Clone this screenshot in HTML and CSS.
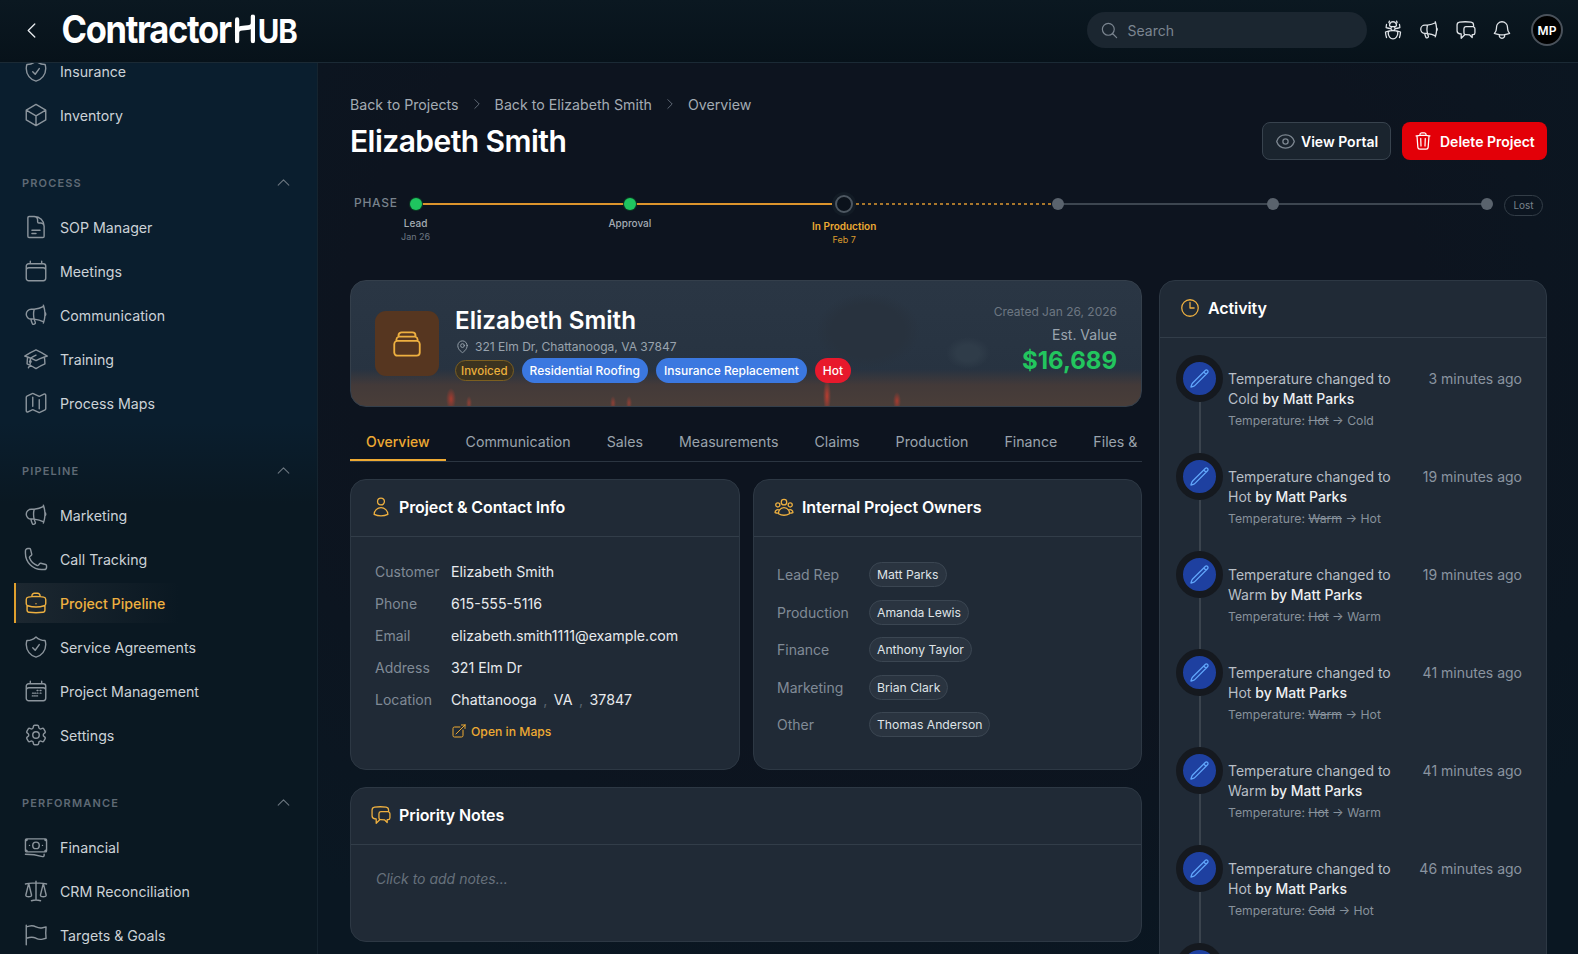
FILE: index.html
```html
<!DOCTYPE html>
<html lang="en">
<head>
<meta charset="utf-8">
<title>ContractorHUB</title>
<link rel="stylesheet" href="styles.css">
</head>
<body>
<svg class="sprite" aria-hidden="true">
<symbol id="shield" viewBox="0 0 24 24"><path d="M9 12.75 11.25 15 15 9.75m-3-7.036A11.959 11.959 0 0 1 3.598 6 11.99 11.99 0 0 0 3 9.749c0 5.592 3.824 10.29 9 11.623 5.176-1.332 9-6.03 9-11.622 0-1.31-.21-2.571-.598-3.751h-.152c-3.196 0-6.1-1.248-8.25-3.285Z"/></symbol>
<symbol id="cube" viewBox="0 0 24 24"><path d="m21 7.5-9-5.25L3 7.5m18 0-9 5.25m9-5.25v9l-9 5.25M3 7.5l9 5.25M3 7.5v9l9 5.25m0-9v9"/></symbol>
<symbol id="doc" viewBox="0 0 24 24"><path d="M19.5 14.25v-2.625a3.375 3.375 0 0 0-3.375-3.375h-1.5A1.125 1.125 0 0 1 13.5 7.125v-1.5a3.375 3.375 0 0 0-3.375-3.375H8.25m0 12.75h7.5m-7.5 3H12M10.5 2.25H5.625c-.621 0-1.125.504-1.125 1.125v17.25c0 .621.504 1.125 1.125 1.125h12.75c.621 0 1.125-.504 1.125-1.125V11.25a9 9 0 0 0-9-9Z"/></symbol>
<symbol id="calendar" viewBox="0 0 24 24"><path d="M6.75 3v2.25M17.25 3v2.25M3 18.75V7.5a2.25 2.25 0 0 1 2.25-2.25h13.5A2.25 2.25 0 0 1 21 7.5v11.25m-18 0A2.25 2.25 0 0 0 5.25 21h13.5A2.25 2.25 0 0 0 21 18.75m-18 0v-7.5A2.25 2.25 0 0 1 5.25 9h13.5A2.25 2.25 0 0 1 21 11.25v7.5"/></symbol>
<symbol id="calendar-days" viewBox="0 0 24 24"><path d="M6.75 3v2.25M17.25 3v2.25M3 18.75V7.5a2.25 2.25 0 0 1 2.25-2.25h13.5A2.25 2.25 0 0 1 21 7.5v11.25m-18 0A2.25 2.25 0 0 0 5.25 21h13.5A2.25 2.25 0 0 0 21 18.75m-18 0v-7.5A2.25 2.25 0 0 1 5.25 9h13.5A2.25 2.25 0 0 1 21 11.25v7.5M13 11.5h.8m2 0h.8m-.8 2.5h.8m-3.6 0h.8m-5 0h.8m1.2 0h.8m-3 2.5h.8m1.2 0h.8m1.2 0h.8"/></symbol>
<symbol id="megaphone" viewBox="0 0 24 24"><path d="M10.34 15.84c-.688-.06-1.386-.09-2.09-.09H7.5a4.5 4.5 0 1 1 0-9h.75c.704 0 1.402-.03 2.09-.09m0 9.18c.253.962.584 1.892.985 2.783.247.55.06 1.21-.463 1.511l-.657.38c-.551.318-1.26.117-1.527-.461a20.845 20.845 0 0 1-1.44-4.282m3.102.069a18.03 18.03 0 0 1-.59-4.59c0-1.586.205-3.124.59-4.59m0 9.18a23.848 23.848 0 0 1 8.835 2.535M10.34 6.66a23.847 23.847 0 0 0 8.835-2.535m0 0A23.74 23.74 0 0 0 18.795 3m.38 1.125a23.91 23.91 0 0 1 1.014 5.395m-1.014 8.855c-.118.38-.245.754-.38 1.125m.38-1.125a23.91 23.91 0 0 0 1.014-5.395m0-3.46c.495.413.811 1.035.811 1.73 0 .695-.316 1.317-.811 1.73m0-3.46a24.347 24.347 0 0 1 0 3.46"/></symbol>
<symbol id="cap" viewBox="0 0 24 24"><path d="M4.26 10.147a60.438 60.438 0 0 0-.491 6.347A48.62 48.62 0 0 1 12 20.904a48.62 48.62 0 0 1 8.232-4.41 60.46 60.46 0 0 0-.491-6.347m-15.482 0a50.636 50.636 0 0 0-2.658-.813A59.906 59.906 0 0 1 12 3.493a59.903 59.903 0 0 1 10.399 5.84c-.896.248-1.783.52-2.658.814m-15.482 0A50.717 50.717 0 0 1 12 13.489a50.702 50.702 0 0 1 7.74-3.342M6.75 15a.75.75 0 1 0 0-1.5.75.75 0 0 0 0 1.5Zm0 0v-3.675A55.378 55.378 0 0 1 12 8.443m-7.007 11.55A5.981 5.981 0 0 0 6.75 15.75v-1.5"/></symbol>
<symbol id="map" viewBox="0 0 24 24"><path d="M9 6.75V15m6-6v8.25m.503 3.498 4.875-2.437c.381-.19.622-.58.622-1.006V4.82c0-.836-.88-1.38-1.628-1.006l-3.869 1.934c-.317.159-.69.159-1.006 0L9.503 3.252a1.125 1.125 0 0 0-1.006 0L3.622 5.689C3.24 5.88 3 6.27 3 6.695V19.18c0 .836.88 1.38 1.628 1.006l3.869-1.934c.317-.159.69-.159 1.006 0l4.994 2.497c.317.158.69.158 1.006 0Z"/></symbol>
<symbol id="phone" viewBox="0 0 24 24"><path d="M2.25 6.75c0 8.284 6.716 15 15 15h2.25a2.25 2.25 0 0 0 2.25-2.25v-1.372c0-.516-.351-.966-.852-1.091l-4.423-1.106c-.44-.11-.902.055-1.173.417l-.97 1.293c-.282.376-.769.542-1.21.38a12.035 12.035 0 0 1-7.143-7.143c-.162-.441.004-.928.38-1.21l1.293-.97c.363-.271.527-.734.417-1.173L6.963 3.102a1.125 1.125 0 0 0-1.091-.852H4.5A2.25 2.25 0 0 0 2.25 4.5v2.25Z"/></symbol>
<symbol id="briefcase" viewBox="0 0 24 24"><path d="M20.25 14.15v4.25c0 1.094-.787 2.036-1.872 2.18-2.087.277-4.216.42-6.378.42s-4.291-.143-6.378-.42c-1.085-.144-1.872-1.086-1.872-2.18v-4.25m16.5 0a2.18 2.18 0 0 0 .75-1.661V8.706c0-1.081-.768-2.015-1.837-2.175a48.114 48.114 0 0 0-3.413-.387m4.5 8.006c-.194.165-.42.295-.673.38A23.978 23.978 0 0 1 12 15.75c-2.648 0-5.195-.429-7.577-1.22a2.016 2.016 0 0 1-.673-.38m0 0A2.18 2.18 0 0 1 3 12.489V8.706c0-1.081.768-2.015 1.837-2.175a48.111 48.111 0 0 1 3.413-.387m7.5 0V5.25A2.25 2.25 0 0 0 13.5 3h-3a2.25 2.25 0 0 0-2.25 2.25v.894m7.5 0a48.667 48.667 0 0 0-7.5 0M12 12.75h.008v.008H12v-.008Z"/></symbol>
<symbol id="cog" viewBox="0 0 24 24"><path d="M9.594 3.94c.09-.542.56-.94 1.11-.94h2.593c.55 0 1.02.398 1.11.94l.213 1.281c.063.374.313.686.645.87.074.04.147.083.22.127.325.196.72.257 1.075.124l1.217-.456a1.125 1.125 0 0 1 1.37.49l1.296 2.247a1.125 1.125 0 0 1-.26 1.431l-1.003.827c-.293.241-.438.613-.43.992a7.723 7.723 0 0 1 0 .255c-.008.378.137.75.43.991l1.004.827c.424.35.534.955.26 1.43l-1.298 2.247a1.125 1.125 0 0 1-1.369.491l-1.217-.456c-.355-.133-.75-.072-1.076.124a6.47 6.47 0 0 1-.22.128c-.331.183-.581.495-.644.869l-.213 1.281c-.09.543-.56.94-1.11.94h-2.594c-.55 0-1.019-.398-1.11-.94l-.213-1.281c-.062-.374-.312-.686-.644-.87a6.52 6.52 0 0 1-.22-.127c-.325-.196-.72-.257-1.076-.124l-1.217.456a1.125 1.125 0 0 1-1.369-.49l-1.297-2.247a1.125 1.125 0 0 1 .26-1.431l1.004-.827c.292-.24.437-.613.43-.991a6.932 6.932 0 0 1 0-.255c.007-.38-.138-.751-.43-.992l-1.004-.827a1.125 1.125 0 0 1-.26-1.43l1.297-2.247a1.125 1.125 0 0 1 1.37-.491l1.216.456c.356.133.751.072 1.076-.124.072-.044.146-.086.22-.128.332-.183.582-.495.644-.869l.214-1.28Z"/><path d="M15 12a3 3 0 1 1-6 0 3 3 0 0 1 6 0Z"/></symbol>
<symbol id="banknotes" viewBox="0 0 24 24"><path d="M2.25 18.75a60.07 60.07 0 0 1 15.797 2.101c.727.198 1.453-.342 1.453-1.096V18.75M3.75 4.5v.75A.75.75 0 0 1 3 6h-.75m0 0v-.375c0-.621.504-1.125 1.125-1.125H20.25M2.25 6v9m18-10.5v.75c0 .414.336.75.75.75h.75m-1.5-1.5h.375c.621 0 1.125.504 1.125 1.125v9.75c0 .621-.504 1.125-1.125 1.125h-.375m1.5-1.5H21a.75.75 0 0 0-.75.75v.75m0 0H3.75m0 0h-.375a1.125 1.125 0 0 1-1.125-1.125V15m1.5 1.5v-.75A.75.75 0 0 0 3 15h-.75M15 10.5a3 3 0 1 1-6 0 3 3 0 0 1 6 0Zm3 0h.008v.008H18V10.5Zm-12 0h.008v.008H6V10.5Z"/></symbol>
<symbol id="scale" viewBox="0 0 24 24"><path d="M12 3v17.25m0 0c-1.472 0-2.882.265-4.185.75M12 20.25c1.472 0 2.882.265 4.185.75M18.75 4.97A48.416 48.416 0 0 0 12 4.5c-2.291 0-4.545.16-6.75.47m13.5 0c1.01.143 2.01.317 3 .52m-3-.52 2.62 10.726c.122.499-.106 1.028-.589 1.202a5.988 5.988 0 0 1-2.031.352 5.988 5.988 0 0 1-2.031-.352c-.483-.174-.711-.703-.59-1.202L18.75 4.971Zm-16.5.52c.99-.203 1.99-.377 3-.52m0 0 2.62 10.726c.122.499-.106 1.028-.589 1.202a5.989 5.989 0 0 1-2.031.352 5.989 5.989 0 0 1-2.031-.352c-.483-.174-.711-.703-.59-1.202L5.25 4.971Z"/></symbol>
<symbol id="flag" viewBox="0 0 24 24"><path d="M3 3v1.5M3 21v-6m0 0 2.77-.693a9 9 0 0 1 6.208.682l.108.054a9 9 0 0 0 6.086.71l3.114-.732a48.524 48.524 0 0 1-.005-10.499l-3.11.732a9 9 0 0 1-6.085-.711l-.108-.054a9 9 0 0 0-6.208-.682L3 4.5M3 15V4.5"/></symbol>
<symbol id="up" viewBox="0 0 24 24"><path d="m4.5 15.75 7.5-7.5 7.5 7.5"/></symbol>
<symbol id="left" viewBox="0 0 24 24"><path d="M15.75 19.5 8.25 12l7.5-7.5"/></symbol>
<symbol id="right" viewBox="0 0 24 24"><path d="m8.25 4.5 7.5 7.5-7.5 7.5"/></symbol>
<symbol id="search" viewBox="0 0 24 24"><path d="m21 21-5.197-5.197m0 0A7.5 7.5 0 1 0 5.196 5.196a7.5 7.5 0 0 0 10.607 10.607Z"/></symbol>
<symbol id="bug" viewBox="0 0 24 24"><path d="M12 12.75c1.148 0 2.278.08 3.383.237 1.037.146 1.866.966 1.866 2.013 0 3.728-2.35 6.75-5.25 6.75S6.75 18.728 6.75 15c0-1.046.83-1.867 1.866-2.013A24.204 24.204 0 0 1 12 12.75Zm0 0c2.883 0 5.647.508 8.207 1.44a23.91 23.91 0 0 1-1.152 6.06M12 12.75c-2.883 0-5.647.508-8.208 1.44.125 2.104.52 4.136 1.153 6.06M12 12.75a2.25 2.25 0 0 0 2.248-2.354M12 12.75a2.25 2.25 0 0 1-2.248-2.354M12 8.25c.995 0 1.971-.08 2.922-.236.403-.066.74-.358.795-.762a3.778 3.778 0 0 0-.399-2.25M12 8.25c-.995 0-1.97-.08-2.922-.236-.402-.066-.74-.358-.795-.762a3.734 3.734 0 0 1 .4-2.253M12 8.25a2.25 2.25 0 0 0-2.248 2.146M12 8.25a2.25 2.25 0 0 1 2.248 2.146M8.683 5a6.032 6.032 0 0 1-1.155-1.002c.07-.63.27-1.222.574-1.747m.581 2.749A3.75 3.75 0 0 1 15.318 5m0 0c.427-.283.815-.62 1.155-.999a4.471 4.471 0 0 0-.575-1.752M4.921 6a24.048 24.048 0 0 0-.392 3.314c1.668.546 3.416.914 5.223 1.082M19.08 6c.205 1.08.337 2.187.392 3.314a23.882 23.882 0 0 1-5.223 1.082"/></symbol>
<symbol id="chat" viewBox="0 0 24 24"><path d="M20.25 8.511c.884.284 1.5 1.128 1.5 2.097v4.286c0 1.136-.847 2.1-1.98 2.193-.34.027-.68.052-1.02.072v3.091l-3-3c-1.354 0-2.694-.055-4.02-.163a2.115 2.115 0 0 1-.825-.242m9.345-8.334a2.126 2.126 0 0 0-.476-.095 48.64 48.64 0 0 0-8.048 0c-1.131.094-1.976 1.057-1.976 2.192v4.286c0 .837.46 1.58 1.155 1.951m9.345-8.334V6.637c0-1.621-1.152-3.026-2.76-3.235A48.455 48.455 0 0 0 11.25 3c-2.115 0-4.198.137-6.24.402-1.608.209-2.76 1.614-2.76 3.235v6.226c0 1.621 1.152 3.026 2.76 3.235.577.075 1.157.14 1.74.194V21l4.155-4.155"/></symbol>
<symbol id="bell" viewBox="0 0 24 24"><path d="M14.857 17.082a23.848 23.848 0 0 0 5.454-1.31A8.967 8.967 0 0 1 18 9.75V9A6 6 0 0 0 6 9v.75a8.967 8.967 0 0 1-2.312 6.022c1.733.64 3.56 1.085 5.455 1.31m5.714 0a24.255 24.255 0 0 1-5.714 0m5.714 0a3 3 0 1 1-5.714 0"/></symbol>
<symbol id="eye" viewBox="0 0 24 24"><path d="M2.036 12.322a1.012 1.012 0 0 1 0-.639C3.423 7.51 7.36 4.5 12 4.5c4.638 0 8.573 3.007 9.963 7.178.07.207.07.431 0 .639C20.577 16.49 16.64 19.5 12 19.5c-4.638 0-8.573-3.007-9.963-7.178Z"/><path d="M15 12a3 3 0 1 1-6 0 3 3 0 0 1 6 0Z"/></symbol>
<symbol id="trash" viewBox="0 0 24 24"><path d="m14.74 9-.346 9m-4.788 0L9.26 9m9.968-3.21c.342.052.682.107 1.022.166m-1.022-.165L18.16 19.673a2.25 2.25 0 0 1-2.244 2.077H8.084a2.25 2.25 0 0 1-2.244-2.077L4.772 5.79m14.456 0a48.108 48.108 0 0 0-3.478-.397m-12 .562c.34-.059.68-.114 1.022-.165m0 0a48.11 48.11 0 0 1 3.478-.397m7.5 0v-.916c0-1.18-.91-2.164-2.09-2.201a51.964 51.964 0 0 0-3.32 0c-1.18.037-2.09 1.022-2.09 2.201v.916m7.5 0a48.667 48.667 0 0 0-7.5 0"/></symbol>
<symbol id="pin" viewBox="0 0 24 24"><path d="M15 10.5a3 3 0 1 1-6 0 3 3 0 0 1 6 0Z"/><path d="M19.5 10.5c0 7.142-7.5 11.25-7.5 11.25S4.5 17.642 4.5 10.5a7.5 7.5 0 1 1 15 0Z"/></symbol>
<symbol id="clock" viewBox="0 0 24 24"><path d="M12 6v6h4.5m4.5 0a9 9 0 1 1-18 0 9 9 0 0 1 18 0Z"/></symbol>
<symbol id="user" viewBox="0 0 24 24"><path d="M15.75 6a3.75 3.75 0 1 1-7.5 0 3.75 3.75 0 0 1 7.5 0ZM4.501 20.118a7.5 7.5 0 0 1 14.998 0A17.933 17.933 0 0 1 12 21.75c-2.676 0-5.216-.584-7.499-1.632Z"/></symbol>
<symbol id="group" viewBox="0 0 24 24"><path d="M18 18.72a9.094 9.094 0 0 0 3.741-.479 3 3 0 0 0-4.682-2.72m.94 3.198.001.031c0 .225-.012.447-.037.666A11.944 11.944 0 0 1 12 21c-2.17 0-4.207-.576-5.963-1.584A6.062 6.062 0 0 1 6 18.719m12 0a5.971 5.971 0 0 0-.941-3.197m0 0A5.995 5.995 0 0 0 12 12.75a5.995 5.995 0 0 0-5.058 2.772m0 0a3 3 0 0 0-4.681 2.72 8.986 8.986 0 0 0 3.74.477m.94-3.197a5.971 5.971 0 0 0-.94 3.197M15 6.75a3 3 0 1 1-6 0 3 3 0 0 1 6 0Zm6 3a2.25 2.25 0 1 1-4.5 0 2.25 2.25 0 0 1 4.5 0Zm-13.5 0a2.25 2.25 0 1 1-4.5 0 2.25 2.25 0 0 1 4.5 0Z"/></symbol>
<symbol id="pencil" viewBox="0 0 24 24"><path d="m16.862 4.487 1.687-1.688a1.875 1.875 0 1 1 2.652 2.652L6.832 19.82a4.5 4.5 0 0 1-1.897 1.13l-2.685.8.8-2.685a4.5 4.5 0 0 1 1.13-1.897L16.863 4.487Zm0 0L19.5 7.125"/></symbol>
<symbol id="external" viewBox="0 0 24 24"><path d="M13.5 6H5.25A2.25 2.25 0 0 0 3 8.25v10.5A2.25 2.25 0 0 0 5.25 21h10.5A2.25 2.25 0 0 0 18 18.75V10.5m-10.5 6L21 3m0 0h-5.25M21 3v5.25"/></symbol>
<symbol id="stack" viewBox="0 0 24 24"><path d="M6 6.878V6a2.25 2.25 0 0 1 2.25-2.25h7.5A2.25 2.25 0 0 1 18 6v.878m-12 0c.235-.083.487-.128.75-.128h10.5c.263 0 .515.045.75.128m-12 0A2.25 2.25 0 0 0 4.5 9v.878m13.5-3A2.25 2.25 0 0 1 19.5 9v.878m0 0a2.246 2.246 0 0 0-.75-.128H5.25c-.263 0-.515.045-.75.128m15 0A2.25 2.25 0 0 1 21 12v6a2.25 2.25 0 0 1-2.25 2.25H5.25A2.25 2.25 0 0 1 3 18v-6c0-.98.626-1.813 1.5-2.122"/></symbol>
</svg>

<header class="topbar">
  <svg class="ico back"><use href="#left"/></svg>
  <div class="logo"><span>Contractor</span><svg class="logo-h" viewBox="0 0 22 28" aria-hidden="true"><path d="M2.500 5v21M2.500 17.500c0-3 2-4.500 8.500-4.500s8.500-1.500 8.500-4.500M19.500 2v24"/></svg><span class="logo-ub">UB</span></div>
  <div class="top-right">
    <div class="search"><svg class="ico"><use href="#search"/></svg><span>Search</span></div>
    <div class="top-icons">
      <svg class="ico"><use href="#bug"/></svg>
      <svg class="ico"><use href="#megaphone"/></svg>
      <svg class="ico"><use href="#chat"/></svg>
      <svg class="ico"><use href="#bell"/></svg>
    </div>
    <div class="avatar">MP</div>
  </div>
</header>

<div class="shell">
  <aside class="sidebar">
    <nav class="nav">
      <a class="item"><svg class="ico"><use href="#shield"/></svg>Insurance</a>
      <a class="item"><svg class="ico"><use href="#cube"/></svg>Inventory</a>
      <div class="sec"><span>PROCESS</span><svg class="ico"><use href="#up"/></svg></div>
      <a class="item"><svg class="ico"><use href="#doc"/></svg>SOP Manager</a>
      <a class="item"><svg class="ico"><use href="#calendar"/></svg>Meetings</a>
      <a class="item"><svg class="ico"><use href="#megaphone"/></svg>Communication</a>
      <a class="item"><svg class="ico"><use href="#cap"/></svg>Training</a>
      <a class="item"><svg class="ico"><use href="#map"/></svg>Process Maps</a>
      <div class="sec"><span>PIPELINE</span><svg class="ico"><use href="#up"/></svg></div>
      <a class="item"><svg class="ico"><use href="#megaphone"/></svg>Marketing</a>
      <a class="item"><svg class="ico"><use href="#phone"/></svg>Call Tracking</a>
      <a class="item active"><svg class="ico"><use href="#briefcase"/></svg>Project Pipeline</a>
      <a class="item"><svg class="ico"><use href="#shield"/></svg>Service Agreements</a>
      <a class="item"><svg class="ico"><use href="#calendar-days"/></svg>Project Management</a>
      <a class="item"><svg class="ico"><use href="#cog"/></svg>Settings</a>
      <div class="sec"><span>PERFORMANCE</span><svg class="ico"><use href="#up"/></svg></div>
      <a class="item"><svg class="ico"><use href="#banknotes"/></svg>Financial</a>
      <a class="item"><svg class="ico"><use href="#scale"/></svg>CRM Reconciliation</a>
      <a class="item"><svg class="ico"><use href="#flag"/></svg>Targets &amp; Goals</a>
    </nav>
  </aside>

  <main class="main">
    <div class="crumbs">
      <span>Back to Projects</span><svg class="ico"><use href="#right"/></svg>
      <span>Back to Elizabeth Smith</span><svg class="ico"><use href="#right"/></svg>
      <span>Overview</span>
    </div>
    <div class="title-row">
      <h1>Elizabeth Smith</h1>
      <div class="actions">
        <button class="btn ghost"><svg class="ico"><use href="#eye"/></svg>View Portal</button>
        <button class="btn danger"><svg class="ico"><use href="#trash"/></svg>Delete Project</button>
      </div>
    </div>

    <div class="phase">
      <div class="phase-label">PHASE</div>
      <div class="track">
        <div class="node"><i class="dot green"></i><div class="nlabel"><b>Lead</b><small>Jan 26</small></div></div>
        <i class="seg done"></i>
        <div class="node"><i class="dot green"></i><div class="nlabel"><b>Approval</b></div></div>
        <i class="seg stop"></i>
        <div class="node"><i class="dot current"></i><div class="nlabel now"><b>In Production</b><small>Feb 7</small></div></div>
        <i class="seg dash"></i>
        <div class="node"><i class="dot"></i></div>
        <i class="seg"></i>
        <div class="node"><i class="dot"></i></div>
        <i class="seg"></i>
        <div class="node"><i class="dot"></i></div>
      </div>
      <div class="lost">Lost</div>
    </div>

    <div class="columns">
      <div class="left">
        <section class="hero">
          <div class="hero-icon"><svg class="ico"><use href="#stack"/></svg></div>
          <div class="hero-text">
            <h2>Elizabeth Smith</h2>
            <div class="addr"><svg class="ico"><use href="#pin"/></svg>321 Elm Dr, Chattanooga, VA 37847</div>
            <div class="pills">
              <span class="pill invoiced">Invoiced</span>
              <span class="pill blue">Residential Roofing</span>
              <span class="pill blue">Insurance Replacement</span>
              <span class="pill hot">Hot</span>
            </div>
          </div>
          <div class="hero-right">
            <div class="created">Created Jan 26, 2026</div>
            <div class="est">Est. Value</div>
            <div class="value">$16,689</div>
          </div>
        </section>

        <div class="tabs">
          <a class="tab on">Overview</a><a class="tab">Communication</a><a class="tab">Sales</a><a class="tab">Measurements</a><a class="tab">Claims</a><a class="tab">Production</a><a class="tab">Finance</a><a class="tab">Files &amp;</a>
        </div>

        <div class="two">
          <section class="card">
            <div class="card-head"><svg class="ico"><use href="#user"/></svg><h3>Project &amp; Contact Info</h3></div>
            <div class="info">
              <div class="row"><span>Customer</span><b>Elizabeth Smith</b></div>
              <div class="row"><span>Phone</span><b>615-555-5116</b></div>
              <div class="row"><span>Email</span><b>elizabeth.smith1111@example.com</b></div>
              <div class="row"><span>Address</span><b>321 Elm Dr</b></div>
              <div class="row"><span>Location</span><b>Chattanooga<em>,</em>VA<em>,</em>37847</b></div>
              <div class="row"><span></span><a class="maps"><svg class="ico"><use href="#external"/></svg>Open in Maps</a></div>
            </div>
          </section>
          <section class="card">
            <div class="card-head"><svg class="ico"><use href="#group"/></svg><h3>Internal Project Owners</h3></div>
            <div class="owners">
              <div class="owner"><span>Lead Rep</span><b>Matt Parks</b></div>
              <div class="owner"><span>Production</span><b>Amanda Lewis</b></div>
              <div class="owner"><span>Finance</span><b>Anthony Taylor</b></div>
              <div class="owner"><span>Marketing</span><b>Brian Clark</b></div>
              <div class="owner"><span>Other</span><b>Thomas Anderson</b></div>
            </div>
          </section>
        </div>

        <section class="card notes">
          <div class="card-head"><svg class="ico"><use href="#chat"/></svg><h3>Priority Notes</h3></div>
          <div class="note-body">Click to add notes...</div>
        </section>
      </div>

      <section class="card activity">
        <div class="card-head"><svg class="ico"><use href="#clock"/></svg><h3>Activity</h3></div>
        <div class="feed">
          <div class="ev"><div class="rail"><div class="disc"><svg class="ico"><use href="#pencil"/></svg></div><i></i></div><div class="ev-text"><p>Temperature changed to<br>Cold <b>by Matt Parks</b></p><small>Temperature: <s>Hot</s> → Cold</small></div><time>3 minutes ago</time></div>
          <div class="ev"><div class="rail"><div class="disc"><svg class="ico"><use href="#pencil"/></svg></div><i></i></div><div class="ev-text"><p>Temperature changed to<br>Hot <b>by Matt Parks</b></p><small>Temperature: <s>Warm</s> → Hot</small></div><time>19 minutes ago</time></div>
          <div class="ev"><div class="rail"><div class="disc"><svg class="ico"><use href="#pencil"/></svg></div><i></i></div><div class="ev-text"><p>Temperature changed to<br>Warm <b>by Matt Parks</b></p><small>Temperature: <s>Hot</s> → Warm</small></div><time>19 minutes ago</time></div>
          <div class="ev"><div class="rail"><div class="disc"><svg class="ico"><use href="#pencil"/></svg></div><i></i></div><div class="ev-text"><p>Temperature changed to<br>Hot <b>by Matt Parks</b></p><small>Temperature: <s>Warm</s> → Hot</small></div><time>41 minutes ago</time></div>
          <div class="ev"><div class="rail"><div class="disc"><svg class="ico"><use href="#pencil"/></svg></div><i></i></div><div class="ev-text"><p>Temperature changed to<br>Warm <b>by Matt Parks</b></p><small>Temperature: <s>Hot</s> → Warm</small></div><time>41 minutes ago</time></div>
          <div class="ev"><div class="rail"><div class="disc"><svg class="ico"><use href="#pencil"/></svg></div><i></i></div><div class="ev-text"><p>Temperature changed to<br>Hot <b>by Matt Parks</b></p><small>Temperature: <s>Cold</s> → Hot</small></div><time>46 minutes ago</time></div>
          <div class="ev"><div class="rail"><div class="disc"><svg class="ico"><use href="#pencil"/></svg></div><i></i></div></div>
        </div>
      </section>
    </div>
  </main>
</div>
</body>
</html>
```
FILE: styles.css
```css
* { box-sizing: border-box; }
html, body { margin: 0; height: 100%; }
body {
  width: 1578px; height: 954px; overflow: hidden;
  display: flex; flex-direction: column;
  background: #0c1520; color: #e6e9ec;
  font-family: Inter, "Liberation Sans", sans-serif; font-size: 14px;
}
.sprite { display: none; }
.ico { width: 20px; height: 20px; flex: none; fill: none; stroke: currentColor; stroke-width: 1.5; stroke-linecap: round; stroke-linejoin: round; }
h1, h2, h3, p { margin: 0; }

/* top bar */
.topbar {
  height: 63px; flex: none; display: flex; align-items: center; padding-bottom: 2px;
  background: linear-gradient(#0b1821, #07121a);
  border-bottom: 1px solid #1b2a35;
  position: relative; z-index: 2;
}
.back { width: 21px; height: 21px; margin-left: 21px; color: #e8ecef; }
.logo { display: flex; align-items: baseline; margin-left: 19.5px; color: #fff; font-weight: 700; font-size: 34.5px; letter-spacing: -1.3px; line-height: 40px; transform: scaleY(1.1); }
.logo-h { width: 22px; height: 26px; margin: 0 2px 0 3px; fill: none; stroke: #fff; stroke-width: 4.6; stroke-linecap: round; }
.logo-ub { font-size: 29.5px; letter-spacing: -1px; }
.top-right { margin-left: auto; display: flex; align-items: center; padding-right: 15px; }
.search { width: 280px; height: 36px; border-radius: 18px; background: #1b2630; display: flex; align-items: center; padding-left: 13px; gap: 9px; color: #7b8590; font-size: 14px; }
.search .ico { width: 19px; height: 19px; }
.top-icons { display: flex; gap: 14.5px; margin-left: 15px; color: #e0e4e8; }
.top-icons .ico { width: 22px; height: 22px; stroke-width: 1.4; }
.avatar { width: 32px; height: 32px; margin-left: 18px; border-radius: 50%; background: #000; border: 2px solid #4a525b; display: flex; align-items: center; justify-content: center; font-size: 12px; font-weight: 600; color: #fff; }

/* sidebar */
.shell { flex: 1; display: flex; min-height: 0; }
.sidebar { width: 318px; flex: none; overflow: hidden; border-right: 1px solid #15242f; background: linear-gradient(#0a1e2e 0, #0a1e2e 360px, #0a1822 440px, #0a1822 100%); }
.nav { margin-top: -14px; display: flex; flex-direction: column; }
.item { height: 40px; margin: 2px 0; padding-left: 23px; display: flex; align-items: center; gap: 11px; font-size: 14.2px; color: #ccd2d7; }
.item .ico { width: 26px; height: 26px; stroke-width: 1.3; color: #8c959d; }
.item.active { margin-left: 14px; padding-left: 7px; border-left: 2px solid #e0a02e; width: 165px; color: #eeb040; font-weight: 500; background: linear-gradient(90deg, #1c2730, #1c273000); }
.item.active .ico { color: #eeb040; }
.sec { height: 44px; margin-top: 24px; padding: 0 25.5px 0 22px; display: flex; align-items: center; justify-content: space-between; font-size: 11px; font-weight: 600; letter-spacing: 1.15px; color: #5f6a75; }
.sec .ico { width: 17px; height: 17px; margin-top: -2px; color: #6d7780; }

/* main */
.main { flex: 1; min-width: 0; padding: 31px 31px 0 32px; overflow: hidden; background: radial-gradient(ellipse 900px 700px at 45% 30%, #0d141f 60%, #0a1722 100%); }
.crumbs { height: 20px; display: flex; align-items: center; gap: 10px; font-size: 14.2px; color: #a3abb3; }
.crumbs .ico { width: 14px; height: 14px; color: #6a7480; margin: 0 1px; }
.title-row { height: 38px; margin-top: 8px; display: flex; align-items: center; justify-content: space-between; }
h1 { font-size: 30px; font-weight: 600; letter-spacing: -.55px; color: #fff; }
.actions { display: flex; gap: 11px; }
.btn { height: 38px; border-radius: 8px; display: flex; align-items: center; white-space: nowrap; font: 600 14px Inter, "Liberation Sans", sans-serif; color: #fff; border: 1px solid transparent; }
.ghost { width: 129px; gap: 5px; padding: 0 0 0 12px; background: #1a242e; border-color: #38434e; }
.ghost .ico { width: 21px; height: 21px; color: #7d8791; }
.danger { width: 145px; gap: 7px; padding: 0 0 0 10px; background: #e30008; }

/* phase */
.phase { margin: 35px 0 67px; height: 18px; padding: 0 4px; display: flex; align-items: center; }
.phase-label { width: 61.6px; margin-top: -4px; font-size: 12px; font-weight: 500; letter-spacing: .7px; color: #78828c; }
.track { flex: 1; display: flex; align-items: center; }
.node { width: 0; height: 18px; display: flex; align-items: center; justify-content: center; position: relative; }
.dot { width: 12px; height: 12px; flex: none; border-radius: 50%; background: #5a636d; }
.dot.green { background: #1fc55f; box-shadow: 0 0 0 1px #0b3a24; }
.dot.current { width: 18px; height: 18px; background: #0b121b; border: 2px solid #4d5761; box-shadow: 0 0 0 3px #121b25; }
.seg { flex: 1; height: 2px; background: #3d4650; }
.seg.done { background: #dc942c; }
.seg.stop { background: linear-gradient(#dc942c, #dc942c) no-repeat 0 0 / calc(100% - 12px) 100%; }
.seg.dash { background: repeating-linear-gradient(90deg, #a9772c 0 3px, transparent 3px 6px) no-repeat 12px 0 / calc(100% - 12px) 100%; }
.nlabel { position: absolute; top: 22px; left: -60px; width: 120px; text-align: center; color: #a4acb4; font-size: 10px; line-height: 13px; }
.nlabel b { display: block; font-weight: 500; }
.nlabel small { display: block; font-size: 9px; color: #6e7883; }
.nlabel.now { top: 24.5px; color: #eeaa33; }
.nlabel.now b { font-weight: 600; }
.nlabel.now small { color: #d99a2e; }
.lost { margin: 2px 0 0 17px; width: 39px; height: 21px; border: 1px solid #333d47; border-radius: 11px; display: flex; align-items: center; justify-content: center; font-size: 10px; color: #79838d; }

/* layout */
.columns { display: flex; gap: 17px; align-items: flex-start; }
.left { width: 792px; flex: none; }

/* hero */
.hero {
  height: 127px; border-radius: 16px; border: 1px solid #343f4b; display: flex; align-items: center; padding: 0 24px; overflow: hidden;
  background:
    radial-gradient(ellipse 5px 11px at 100px 118px, #a63b2f, #a63b2f00),
    radial-gradient(ellipse 3px 7px at 118px 122px, #8f4036, #8f403600),
    radial-gradient(ellipse 3px 7px at 262px 122px, #8f4036, #8f403600),
    radial-gradient(ellipse 3px 7px at 278px 122px, #8f4036, #8f403600),
    radial-gradient(ellipse 4px 17px at 476px 115px, #b83d30, #b83d3000),
    radial-gradient(ellipse 4px 9px at 546px 120px, #a63b2f, #a63b2f00),
    radial-gradient(ellipse 52px 38px at 517px 50px, #28323e 70%, #28323e00),
    radial-gradient(ellipse 22px 16px at 617px 72px, #2f3c49 50%, #2f3c4900),
    linear-gradient(#29354300 0, #29354300 88px, #433a39 104px, #4a3e39 127px),
    linear-gradient(#2a3644, #263240);
}
.hero-icon { width: 64px; height: 65px; flex: none; border-radius: 11px; background: #563620; display: flex; align-items: center; justify-content: center; color: #eeb040; }
.hero-icon .ico { width: 34px; height: 34px; stroke-width: 1.3; }
.hero-text { margin-left: 16px; padding-top: 1px; }
h2 { font-size: 24.2px; font-weight: 600; line-height: 32px; color: #fff; }
.addr { height: 18px; display: flex; align-items: center; gap: 5px; font-size: 12.05px; color: #99a3ad; }
.addr .ico { width: 15px; height: 15px; }
.pills { margin-top: 3px; height: 25px; display: flex; align-items: center; gap: 8px; }
.pill { font-size: 12px; font-weight: 500; border-radius: 13px; display: flex; align-items: center; }
.invoiced { height: 21px; padding: 0 5px; font-size: 11.5px; background: #3b3320; border: 1px solid #7c5f20; color: #ebb03c; }
.blue { height: 25px; padding: 0 8px; background: #3b78e0; color: #fff; }
.hot { height: 25px; padding: 0 8px; background: #e8192c; color: #fff; }
.hero-right { margin-left: auto; margin-bottom: 7px; text-align: right; }
.created { font-size: 12px; line-height: 18px; color: #6d7782; }
.est { margin-top: 4px; font-size: 14px; line-height: 20px; color: #9aa4ae; }
.value { font-size: 24px; font-weight: 700; line-height: 32px; color: #22c55e; }

/* tabs */
.tabs { margin-top: 18px; height: 37px; display: flex; gap: 4px; overflow: hidden; border-bottom: 1px solid #2b3541; white-space: nowrap; }
.tab { flex: none; padding: 0 16px; height: 36px; line-height: 34px; font-size: 14.2px; color: #9aa3ac; }
.tab.on { color: #eeaa33; font-weight: 500; font-size: 14px; border-bottom: 2px solid #eeaa33; line-height: 33px; }

/* cards */
.two { margin-top: 17px; display: grid; grid-template-columns: 390px 389px; gap: 13px; }
.card { background: #202a36; border: 1px solid #2d3844; border-radius: 16px; overflow: hidden; }
.two .card { height: 291px; }
.card-head { height: 57px; padding: 0 19px 3px; display: flex; align-items: center; gap: 7px; border-bottom: 1px solid #323d49; }
.card-head .ico { width: 22px; height: 22px; color: #eeb040; stroke-width: 1.4; }
h3 { font-size: 16px; font-weight: 600; letter-spacing: -.1px; color: #fff; }
.info { padding: 18px 24px 0; }
.row { height: 32px; display: flex; align-items: center; }
.row span { width: 76px; flex: none; color: #808b96; }
.row b { font-weight: 400; font-size: 14.2px; color: #e8ebee; }
.row em { font-style: normal; color: #5a646f; margin: 0 6.5px; }
.maps { display: flex; align-items: center; gap: 4px; font-size: 12.2px; font-weight: 500; color: #eeaa33; }
.maps .ico { width: 16px; height: 16px; }
.owners { padding: 25px 23px 0; display: flex; flex-direction: column; gap: 12.5px; }
.owner { height: 25px; display: flex; align-items: center; }
.owner span { width: 92px; flex: none; color: #808b96; }
.owner b { font-weight: 400; font-size: 12.2px; height: 25px; line-height: 23px; padding: 0 7px; border-radius: 13px; background: #2a3440; border: 1px solid #3b4652; color: #dfe3e7; }
.notes { margin-top: 17px; height: 155px; }
.note-body { padding: 25px; font-style: italic; font-size: 14px; color: #67717c; }

/* activity */
.activity { width: 388px; flex: none; height: 700px; }
.feed { padding: 17px 24px 0 16px; }
.ev { height: 98px; display: flex; }
.rail { width: 47px; flex: none; display: flex; flex-direction: column; align-items: center; }
.rail i { flex: 1; width: 2px; background: #3a434d; }
.disc { width: 47px; height: 47px; flex: none; border-radius: 50%; border: 7px solid #15191f; background: #1e40a0; display: flex; align-items: center; justify-content: center; color: #60a5fa; }
.disc .ico { width: 21px; height: 21px; }
.ev-text { width: 175px; margin-left: 5px; padding-top: 14px; }
.ev-text p { font-size: 14px; line-height: 20px; color: #b8bfc6; }
.ev-text p b { font-weight: 500; color: #eef0f2; }
.ev-text small { display: block; margin-top: 3px; font-size: 12.2px; line-height: 18px; color: #87919b; }
time { margin-left: auto; padding-top: 14px; line-height: 20px; color: #8a94a0; white-space: nowrap; }
```
